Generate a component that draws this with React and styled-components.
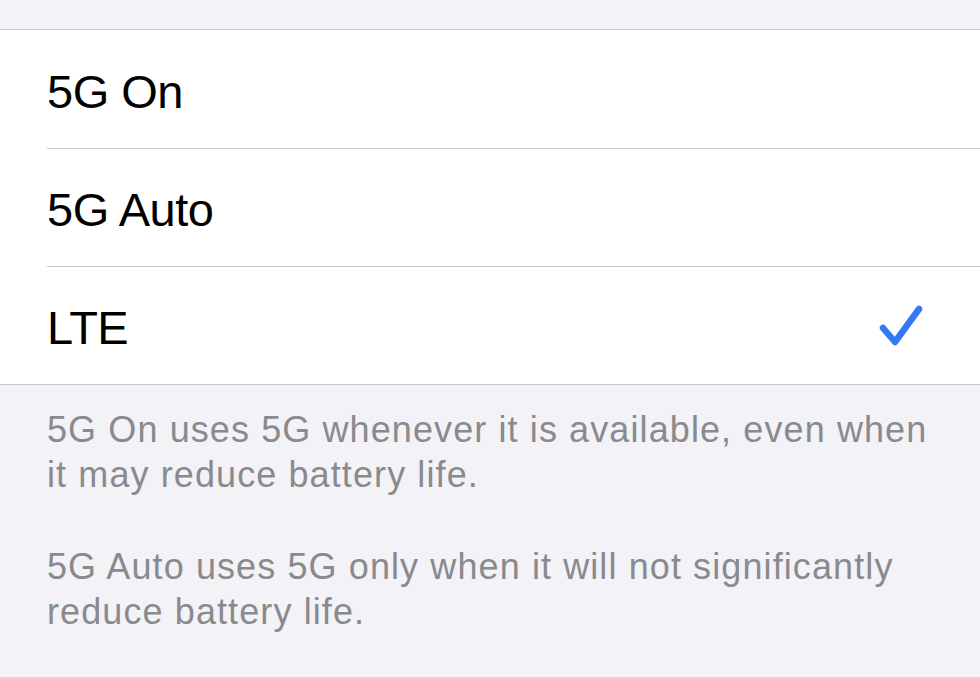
import React from 'react';
import styled, { createGlobalStyle } from 'styled-components';

const GlobalStyle = createGlobalStyle`
  html, body {
    margin: 0;
    padding: 0;
    background: #f2f2f7;
    font-family: "Liberation Sans", Arial, sans-serif;
    -webkit-font-smoothing: antialiased;
  }
`;

const Page = styled.div`
  width: 980px;
  height: 677px;
  overflow: hidden;
  background: #f2f2f7;
  padding-top: 29px;
  box-sizing: border-box;
`;

const Group = styled.ul`
  list-style: none;
  margin: 0;
  padding: 0;
  background: #fff;
  border-top: 1px solid #c8c7cc;
  border-bottom: 1px solid #c8c7cc;
`;

const Row = styled.li`
  display: flex;
  align-items: center;
  height: 118px;
  padding-left: 47px;
  position: relative;

  & + &::before {
    content: '';
    position: absolute;
    left: 47px;
    right: 0;
    top: 0;
    height: 1px;
    background: #c8c7cc;
  }
`;

const Label = styled.span`
  flex: 1;
  font-size: 47px;
  letter-spacing: -0.5px;
  color: #000;
  padding-top: 4px;
`;

const Check = styled.svg`
  width: 48px;
  height: 46px;
  margin-right: 54px;
  margin-top: 4px;
`;

const Footer = styled.div`
  padding: 22px 40px 0 47px;
  color: #8a8a8e;
  font-size: 36px;
  line-height: 45px;
  letter-spacing: 1.1px;
`;

const Note = styled.p`
  margin: 0 0 47px;
`;

const options = [
  { label: '5G On' },
  { label: '5G Auto' },
  { label: 'LTE', selected: true },
];

const Checkmark = () => (
  <Check viewBox="0 0 48 46" fill="none">
    <path
      d="M5 24 L17 38 L41 5"
      stroke="#3478f6"
      strokeWidth="6.5"
      strokeLinecap="round"
      strokeLinejoin="round"
    />
  </Check>
);

const App = () => (
  <Page>
    <GlobalStyle />
    <Group>
      {options.map((o) => (
        <Row key={o.label}>
          <Label>{o.label}</Label>
          {o.selected && <Checkmark />}
        </Row>
      ))}
    </Group>
    <Footer>
      <Note>5G On uses 5G whenever it is available, even when it may reduce battery life.</Note>
      <Note>5G Auto uses 5G only when it will not significantly reduce battery life.</Note>
    </Footer>
  </Page>
);

export default App;
